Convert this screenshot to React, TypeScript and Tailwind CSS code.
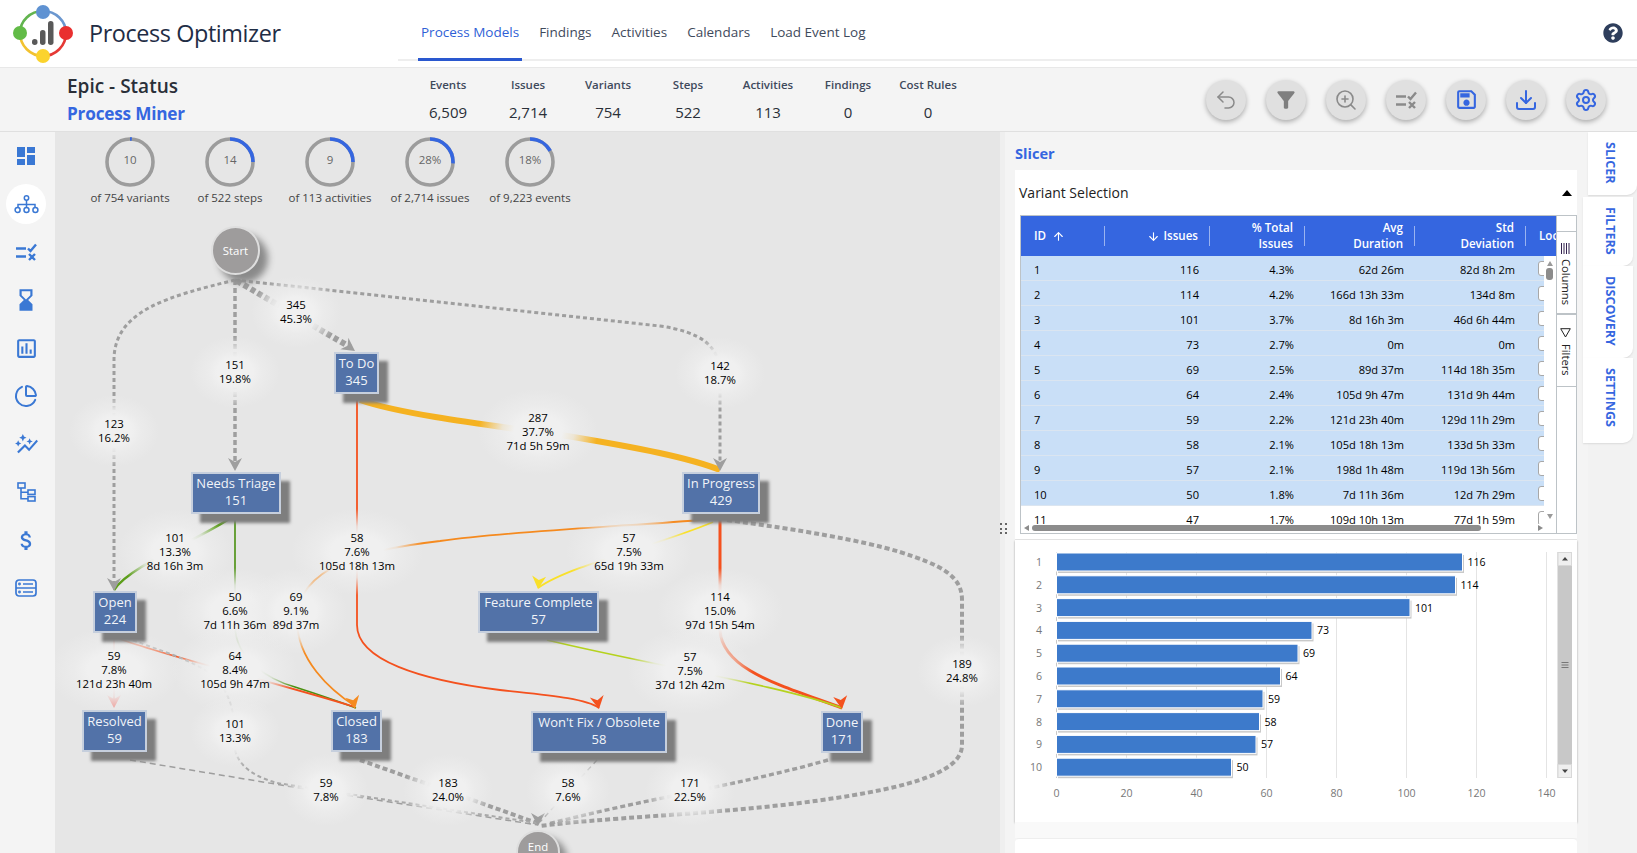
import { ArrowDown, ArrowUp, Download, PieChart, Settings, Undo2, ZoomIn } from 'lucide-react';
import { FaQuestionCircle } from 'react-icons/fa';
import { MdAttachMoney, MdAutoGraph, MdDashboard, MdFilterAlt, MdHourglassBottom, MdOutlineAssessment, MdOutlineSave } from 'react-icons/md';

const navItems = ['Process Models', 'Findings', 'Activities', 'Calendars', 'Load Event Log'];

const stats = [
  { label: 'Events', value: '6,509' },
  { label: 'Issues', value: '2,714' },
  { label: 'Variants', value: '754' },
  { label: 'Steps', value: '522' },
  { label: 'Activities', value: '113' },
  { label: 'Findings', value: '0' },
  { label: 'Cost Rules', value: '0' },
];

const rings = [
  { value: '10', label: 'of 754 variants', pct: 1.3 },
  { value: '14', label: 'of 522 steps', pct: 25 },
  { value: '9', label: 'of 113 activities', pct: 25 },
  { value: '28%', label: 'of 2,714 issues', pct: 26 },
  { value: '18%', label: 'of 9,223 events', pct: 17 },
];

const rows = [
  ['1', '116', '4.3%', '62d 26m', '82d 8h 2m'],
  ['2', '114', '4.2%', '166d 13h 33m', '134d 8m'],
  ['3', '101', '3.7%', '8d 16h 3m', '46d 6h 44m'],
  ['4', '73', '2.7%', '0m', '0m'],
  ['5', '69', '2.5%', '89d 37m', '114d 18h 35m'],
  ['6', '64', '2.4%', '105d 9h 47m', '131d 9h 44m'],
  ['7', '59', '2.2%', '121d 23h 40m', '129d 11h 29m'],
  ['8', '58', '2.1%', '105d 18h 13m', '133d 5h 33m'],
  ['9', '57', '2.1%', '198d 1h 48m', '119d 13h 56m'],
  ['10', '50', '1.8%', '7d 11h 36m', '12d 7h 29m'],
  ['11', '47', '1.7%', '109d 10h 13m', '77d 1h 59m'],
];

const bars = [116, 114, 101, 73, 69, 64, 59, 58, 57, 50];

// page coordinates, the svg below uses the same ones
const nodes = [
  { name: 'To Do', count: 345, x: 334, y: 352, w: 45, h: 42 },
  { name: 'Needs Triage', count: 151, x: 191, y: 472, w: 90, h: 42 },
  { name: 'In Progress', count: 429, x: 682, y: 472, w: 78, h: 42 },
  { name: 'Feature Complete', count: 57, x: 478, y: 591, w: 121, h: 42 },
  { name: 'Open', count: 224, x: 93, y: 591, w: 44, h: 42 },
  { name: 'Resolved', count: 59, x: 82, y: 710, w: 65, h: 42 },
  { name: 'Closed', count: 183, x: 331, y: 710, w: 51, h: 42 },
  { name: "Won't Fix / Obsolete", count: 58, x: 531, y: 711, w: 136, h: 42 },
  { name: 'Done', count: 171, x: 821, y: 711, w: 42, h: 42 },
];

const edgeLabels = [
  { x: 296, y: 312, lines: ['345', '45.3%'] },
  { x: 235, y: 372, lines: ['151', '19.8%'] },
  { x: 114, y: 431, lines: ['123', '16.2%'] },
  { x: 720, y: 373, lines: ['142', '18.7%'] },
  { x: 538, y: 432, lines: ['287', '37.7%', '71d 5h 59m'] },
  { x: 175, y: 552, lines: ['101', '13.3%', '8d 16h 3m'] },
  { x: 357, y: 552, lines: ['58', '7.6%', '105d 18h 13m'] },
  { x: 629, y: 552, lines: ['57', '7.5%', '65d 19h 33m'] },
  { x: 720, y: 611, lines: ['114', '15.0%', '97d 15h 54m'] },
  { x: 235, y: 611, lines: ['50', '6.6%', '7d 11h 36m'] },
  { x: 296, y: 611, lines: ['69', '9.1%', '89d 37m'] },
  { x: 114, y: 670, lines: ['59', '7.8%', '121d 23h 40m'] },
  { x: 235, y: 670, lines: ['64', '8.4%', '105d 9h 47m'] },
  { x: 690, y: 671, lines: ['57', '7.5%', '37d 12h 42m'] },
  { x: 962, y: 671, lines: ['189', '24.8%'] },
  { x: 235, y: 731, lines: ['101', '13.3%'] },
  { x: 326, y: 790, lines: ['59', '7.8%'] },
  { x: 448, y: 790, lines: ['183', '24.0%'] },
  { x: 568, y: 790, lines: ['58', '7.6%'] },
  { x: 690, y: 790, lines: ['171', '22.5%'] },
];

const edges = [
  { d: 'M235 280 C170 296 114 310 114 360 L114 585', c: '#9e9e9e', w: 3, dash: '4 3' },
  { d: 'M235 280 L235 462', c: '#9e9e9e', w: 3.5, dash: '5 3' },
  { d: 'M237 281 C270 300 320 330 350 347', c: '#9e9e9e', w: 6, dash: '5 3' },
  { d: 'M235 280 L660 326 C700 332 720 345 720 375 L720 462', c: '#9e9e9e', w: 3, dash: '4 3' },
  { d: 'M360 400 C400 414 480 424 567 436 C640 448 690 458 720 470', c: '#f5b221', w: 6 },
  { d: 'M357 394 L357 625 C357 660 420 680 500 690 C545 695 585 698 599 708', c: '#f4511e', w: 1.8 },
  { d: 'M235 515 C200 540 130 565 114 590', c: '#5c9e1a', w: 2.6 },
  { d: 'M235 513 L235 625 C235 660 270 680 295 687 C320 695 340 702 356 708', c: '#4a9010', w: 1.6 },
  { d: 'M118 638 C150 652 250 675 355 707', c: '#f4511e', w: 1.8 },
  { d: 'M114 633 L114 704', c: '#ee6a5f', w: 1.2 },
  { d: 'M700 520 C620 527 520 530 440 541 C370 549 297 565 297 620 C297 660 330 690 355 706', c: '#f58a1f', w: 1.8 },
  { d: 'M713 522 C660 545 570 565 538 588', c: '#f9e02a', w: 1.8 },
  { d: 'M720 513 L720 630 C722 670 780 685 842 708', c: '#f4511e', w: 3 },
  { d: 'M547 640 C650 665 780 685 842 708', c: '#b5d21e', w: 1.6 },
  { d: 'M727 520 C800 530 860 540 900 552 C940 565 962 575 962 600 L962 745 C962 775 900 790 800 803 C700 815 600 818 540 826', c: '#9e9e9e', w: 4, dash: '5 3' },
  { d: 'M360 760 L537 823', c: '#9e9e9e', w: 4, dash: '5 3' },
  { d: 'M130 760 L293 787 L538 825', c: '#9e9e9e', w: 1.5, dash: '6 4' },
  { d: 'M120 635 C150 648 180 655 205 670 C235 690 235 720 235 750 C240 770 260 778 277 783 L537 823', c: '#a8a8a8', w: 2, dash: '4 3' },
  { d: 'M597 760 L540 822', c: '#a8a8a8', w: 1.4, dash: '5 4' },
  { d: 'M828 760 C740 785 640 800 548 824', c: '#9e9e9e', w: 3.4, dash: '5 3' },
];

const arrows = [
  { x: 114, y: 591, a: 0, c: '#9e9e9e' },
  { x: 235, y: 471, a: 0, c: '#9e9e9e' },
  { x: 355, y: 351, a: -55, c: '#9e9e9e' },
  { x: 720, y: 471, a: 0, c: '#9e9e9e' },
  { x: 114, y: 708, a: 0, c: '#ef8f88' },
  { x: 355, y: 709, a: -12, c: '#f58a1f' },
  { x: 599, y: 709, a: -10, c: '#f4511e' },
  { x: 842, y: 709, a: -8, c: '#f4511e' },
  { x: 538, y: 589, a: 5, c: '#f9e02a' },
  { x: 538, y: 826, a: 0, c: '#9e9e9e' },
];

const Logo = () => (
  <svg width="62" height="64" viewBox="0 0 62 64" className="shrink-0">
    <g fill="none" strokeWidth="2.6">
      <path d="M31 11 A23 22 0 0 1 54 33" stroke="#6b97cf" />
      <path d="M54 33 A23 23 0 0 1 31 56" stroke="#e53935" />
      <path d="M31 56 A23 23 0 0 1 8 33" stroke="#f2c230" />
      <path d="M8 33 A23 22 0 0 1 31 11" stroke="#62b44f" />
    </g>
    <circle cx="31" cy="12" r="7" fill="#5f92d2" />
    <circle cx="8" cy="33" r="7" fill="#62bb47" />
    <circle cx="54" cy="33" r="7" fill="#e92f2f" />
    <circle cx="31" cy="56" r="7" fill="#fbd32d" />
    <g fill="#595959">
      <rect x="20" y="39" width="5.5" height="6" rx="2.7" />
      <rect x="28" y="30" width="5.5" height="15" rx="2.7" />
      <rect x="36" y="21" width="5.5" height="24" rx="2.7" />
    </g>
  </svg>
);

const ProcessIcon = () => (
  <svg width="25" height="19" viewBox="0 0 25 19" fill="none" stroke="#3a78d4" strokeWidth="1.5">
    <circle cx="12.5" cy="3" r="2.2" />
    <path d="M12.5 5.2V12 M4 12V9.5H21V12" />
    <circle cx="3.6" cy="15" r="2.5" />
    <circle cx="12.5" cy="15" r="2.5" />
    <circle cx="21.4" cy="15" r="2.5" />
  </svg>
);

const RuleIcon = ({ color, size }: { color: string; size: number }) => (
  <svg width={size} height={size} viewBox="0 0 24 24" fill="none" stroke={color} strokeWidth="2.4">
    <path d="M2 8.5H12 M2 16.5H12 M14 8.5L16.5 11L22 4.5 M15 14L21 20 M21 14L15 20" />
  </svg>
);

const TreeIcon = () => (
  <svg width="19" height="20" viewBox="0 0 19 20" fill="none" stroke="#3a78d4" strokeWidth="1.6">
    <rect x="1" y="1" width="7" height="5" />
    <rect x="11" y="8" width="7" height="4.4" />
    <rect x="11" y="14.6" width="7" height="4.4" />
    <path d="M4 6V16.8H11 M4 10.2H11" />
  </svg>
);

const ServerIcon = () => (
  <svg width="22" height="18" viewBox="0 0 22 18" fill="none" stroke="#3a78d4" strokeWidth="1.7">
    <rect x="1" y="1" width="20" height="16" rx="3" />
    <path d="M1 9H21 M8 5H18 M8 13H18" />
    <circle cx="4.5" cy="5" r="0.6" />
    <circle cx="4.5" cy="13" r="0.6" />
  </svg>
);

const sideIcons = [
  <MdDashboard key="a" size={24} color="#3a78d4" />,
  <ProcessIcon key="b" />,
  <RuleIcon key="c" color="#3a78d4" size={24} />,
  <MdHourglassBottom key="d" size={26} color="#3a78d4" />,
  <MdOutlineAssessment key="e" size={25} color="#3a78d4" />,
  <PieChart key="f" size={24} color="#3a78d4" strokeWidth={2} />,
  <MdAutoGraph key="g" size={25} color="#3a78d4" />,
  <TreeIcon key="h" />,
  <MdAttachMoney key="i" size={25} color="#3a78d4" />,
  <ServerIcon key="j" />,
];

const Ring = ({ value, label, pct }: { value: string; label: string; pct: number }) => (
  <div className="w-[100px] flex flex-col items-center">
    <div className="relative w-[50px] h-[50px] flex items-center justify-center">
      <svg width="50" height="50" viewBox="0 0 50 50" className="absolute inset-0 -rotate-90">
        <circle cx="25" cy="25" r="23" fill="none" stroke="#9c9c9c" strokeWidth="3.6" />
        <circle cx="25" cy="25" r="23" fill="none" stroke="#3566e0" strokeWidth="3.6" pathLength={100} strokeDasharray={`${pct} 100`} />
      </svg>
      <span className="text-[11.5px] text-[#666666] -mt-[4px]">{value}</span>
    </div>
    <span className="text-[11.5px] leading-[16px] mt-[3px] text-[#444444] whitespace-nowrap">{label}</span>
  </div>
);

const Canvas = () => (
  <div className="relative w-[945px] bg-[#e6e6e6] overflow-hidden">
    <div className="relative z-10 flex pl-[25px] pt-[5px]">
      {rings.map((r) => (
        <Ring key={r.label} {...r} />
      ))}
    </div>
    <svg width="945" height="721" viewBox="55 132 945 721" className="absolute left-0 top-0">
      {edges.map((e, i) => (
        <path key={i} d={e.d} fill="none" stroke={e.c} strokeWidth={e.w} strokeDasharray={e.dash} />
      ))}
      {arrows.map((a, i) => (
        <path key={i} transform={`translate(${a.x} ${a.y}) rotate(${a.a})`} d="M0 0L-7 -13L0 -9L7 -13Z" fill={a.c} />
      ))}
    </svg>
    {/* glows go first so that a neighbouring glow never washes out a label */}
    {edgeLabels.map((l) => {
      const w = Math.max(...l.lines.map((t) => t.length)) * 6 + 60;
      const h = l.lines.length * 14 + 44;
      return (
        <div
          key={`${l.x}-${l.y}`}
          className="absolute bg-[radial-gradient(closest-side,#f0f0f0_40%,#ececece0_60%,#e6e6e600_100%)]"
          style={{ left: l.x - 55 - w / 2, top: l.y - 132 - h / 2, width: w, height: h }}
        />
      );
    })}
    {edgeLabels.map((l) => (
      <div
        key={`${l.x}-${l.y}`}
        className="absolute -translate-x-1/2 -translate-y-1/2 text-center text-[11.4px] leading-[14px] text-black whitespace-nowrap"
        style={{ left: l.x - 55, top: l.y - 132 }}
      >
        {l.lines.map((t) => (
          <div key={t}>{t}</div>
        ))}
      </div>
    ))}
    {nodes.map((n) => (
      <div
        key={n.name}
        className="absolute flex flex-col justify-center items-center pb-[2px] bg-[#5272a8] border-2 border-[#c6cfdd] shadow-[9px_9px_3px_#7e7e7e] text-[#f1f4f9] text-[13px] leading-[17px] whitespace-nowrap"
        style={{ left: n.x - 55, top: n.y - 132, width: n.w, height: n.h }}
      >
        <span>{n.name}</span>
        <span>{n.count}</span>
      </div>
    ))}
    <div className="absolute left-[156px] top-[94px] w-[49px] h-[49px] rounded-full bg-[#9e9c9c] border-2 border-[#dedede] shadow-[8px_8px_7px_#8a8a8a] flex items-center justify-center text-white text-[11.4px]">
      Start
    </div>
    <div className="absolute left-[461px] top-[698px] w-[44px] h-[44px] rounded-full bg-[#9e9c9c] border-2 border-[#dedede] shadow-[7px_7px_7px_#8a8a8a] flex justify-center pt-[9px] text-white text-[11.4px] leading-[11px]">
      End
    </div>
  </div>
);

const colClasses = ['w-[84px] text-left pl-[13px]', 'w-[105px] text-right pr-[11px]', 'w-[95px] text-right pr-[11px]', 'w-[110px] text-right pr-[11px]', 'w-[111px] text-right pr-[11px]'];

const Grid = () => (
  <div className="ml-[5px] h-[319px] w-[557px] border border-[#bdc3c7] flex bg-white">
    <div className="w-[535px] flex flex-col">
      <div className="h-[40px] bg-[#3566e0] text-white text-[11.6px] leading-[16px] font-semibold flex overflow-hidden shrink-0">
        <div className="w-[84px] shrink-0 flex items-center">
          <span className="flex-1 pl-[13px] flex items-center gap-[6px]">ID <ArrowUp size={13} /></span>
          <span className="w-px h-[20px] bg-white/50" />
        </div>
        <div className="w-[105px] shrink-0 flex items-center">
          <span className="flex-1 pr-[11px] flex items-center justify-end gap-[3px]"><ArrowDown size={13} /> Issues</span>
          <span className="w-px h-[20px] bg-white/50" />
        </div>
        <div className="w-[95px] shrink-0 flex items-center">
          <span className="flex-1 pr-[11px] text-right">% Total<br />Issues</span>
          <span className="w-px h-[20px] bg-white/50" />
        </div>
        <div className="w-[110px] shrink-0 flex items-center">
          <span className="flex-1 pr-[11px] text-right">Avg<br />Duration</span>
          <span className="w-px h-[20px] bg-white/50" />
        </div>
        <div className="w-[111px] shrink-0 flex items-center">
          <span className="flex-1 pr-[11px] text-right">Std<br />Deviation</span>
          <span className="w-px h-[20px] bg-white/50" />
        </div>
        <div className="shrink-0 flex items-center pl-[13px]">Loc</div>
      </div>
      <div className="h-[268px] flex shrink-0">
        <div className="w-[523px] overflow-hidden">
          {rows.map((r, i) => (
            <div key={r[0]} className={`w-[540px] h-[25px] flex items-center pt-[4px] text-[11.1px] text-black border-b ${i < 10 ? 'bg-[#c9dff7] border-[#dbe5f0]' : 'bg-white border-white'}`}>
              {r.map((c, j) => (
                <div key={j} className={`${colClasses[j]} shrink-0`}>{c}</div>
              ))}
              <div className="ml-[12px] -mt-[3px] w-[12px] h-[15px] shrink-0 bg-white border border-[#a8a8a8] rounded-[3px]" />
            </div>
          ))}
        </div>
        <div className="w-[12px] relative bg-white">
          <span className="absolute left-[3px] top-[5px] w-0 h-0 border-x-[3px] border-x-transparent border-b-[5px] border-b-[#9a9a9a]" />
          <span className="absolute left-[2px] top-[12px] w-[7px] h-[12px] rounded-[3px] bg-[#8c8c8c]" />
          <span className="absolute left-[3px] bottom-[5px] w-0 h-0 border-x-[3px] border-x-transparent border-t-[5px] border-t-[#9a9a9a]" />
        </div>
      </div>
      <div className="h-[9px] relative bg-white">
        <span className="absolute left-[3px] top-[1px] w-0 h-0 border-y-[3px] border-y-transparent border-r-[5px] border-r-[#8c8c8c]" />
        <span className="absolute left-[11px] top-[1px] w-[449px] h-[6px] rounded-[3px] bg-[#8c8c8c]" />
        <span className="absolute right-[13px] top-[1px] w-0 h-0 border-y-[3px] border-y-transparent border-l-[5px] border-l-[#8c8c8c]" />
      </div>
    </div>
    <div className="w-[21px] border-l border-[#bdc3c7] flex flex-col text-[11.2px] text-[#222222]">
      <div className="h-[16px] border-b border-[#bdc3c7]" />
      <div className="h-[83px] border-b-2 border-[#bdc3c7] flex flex-col items-center pr-[2px] pt-[11px] gap-[5px]">
        <svg width="11" height="11" viewBox="0 0 11 11" stroke="#33224f" strokeWidth="1"><path d="M1.5 0V11 M4 0V11 M6.5 0V11 M9 0V11" /></svg>
        <span className="[writing-mode:vertical-rl]">Columns</span>
      </div>
      <div className="h-[72px] border-b border-[#bdc3c7] flex flex-col items-center pr-[2px] pt-[13px] gap-[6px]">
        <svg width="11" height="10" viewBox="0 0 11 10" fill="none" stroke="#222222" strokeWidth="1"><path d="M0.7 0.7H10.3L5.5 9Z" /></svg>
        <span className="[writing-mode:vertical-rl]">Filters</span>
      </div>
    </div>
  </div>
);

const BarChart = () => (
  <svg width="562" height="282" viewBox="1015 540 562 282" className="block">
    {[0, 1, 2, 3, 4, 5, 6, 7].map((k) => (
      <g key={k}>
        <path d={`M${1056.5 + 70 * k} 552V778`} stroke={k === 0 ? '#c8c8c8' : '#e4e4e4'} strokeWidth="1" />
        <text x={1056.5 + 70 * k} y="797" textAnchor="middle" fontSize="10.6" fill="#777777">{k * 20}</text>
      </g>
    ))}
    {bars.map((b, i) => {
      const y = 553 + i * 22.8;
      const w = b * 3.5;
      return (
        <g key={i}>
          <rect x="1058" y={y + 2} width={w} height="18" fill="#c9c9c9" />
          <rect x="1056.5" y={y} width={w} height="18" fill="#3d7acb" stroke="#ffffff" strokeWidth="1" />
          <text x="1042" y={y + 13} textAnchor="end" fontSize="10.6" fill="#777777">{i + 1}</text>
          <text x={1056.5 + w + 5} y={y + 13} fontSize="10.6" fill="#000000">{b}</text>
        </g>
      );
    })}
    <rect x="1557.5" y="552" width="14.5" height="226" fill="#c8c8c8" />
    <rect x="1558" y="552.5" width="13.5" height="13" fill="#efefef" stroke="#d8d8d8" />
    <rect x="1558" y="764.5" width="13.5" height="13" fill="#efefef" stroke="#d8d8d8" />
    <path d="M1565 557L1568 560.5H1562Z M1565 773L1568 769.5H1562Z" fill="#444444" />
    <path d="M1561.5 662.5H1568.5 M1561.5 665H1568.5 M1561.5 667.5H1568.5" stroke="#777777" strokeWidth="1.2" />
  </svg>
);

const tabs = [
  { name: 'FILTERS', h: 'h-[69px]' },
  { name: 'DISCOVERY', h: 'h-[92px]' },
  { name: 'SETTINGS', h: 'h-[85px]' },
];

const Panel = () => (
  <>
    <div className="w-[5px] relative bg-[#efefef]">
      <div className="absolute left-0 top-[391px] w-[8px] h-[12px] grid grid-cols-2 gap-[2px] z-10">
        {[0, 1, 2, 3, 4, 5].map((k) => (
          <span key={k} className="w-[2px] h-[2px] bg-[#666666]" />
        ))}
      </div>
    </div>
    <div className="w-[583px] bg-[#f4f4f4] flex flex-col pl-[10px] pr-[11px]">
      <div className="h-[38px] flex items-center pt-[6px] text-[14.6px] font-bold text-[#3566e0]">Slicer</div>
      <div className="bg-white shrink-0">
        <div className="h-[45px] flex items-center justify-between pl-[4px] pr-[5px] text-[14px] text-[#222222]">
          <span>Variant Selection</span>
          <span className="w-0 h-0 border-x-[5px] border-x-transparent border-b-[6px] border-b-black" />
        </div>
        <Grid />
        <div className="h-[6px] border-b border-[#e8e8e8]" />
        <div className="shadow-[0_1px_2px_rgba(0,0,0,0.35)]">
          <BarChart />
        </div>
      </div>
      <div className="h-[16px] shrink-0 bg-[#f9f9f9]" />
      <div className="flex-1 bg-white rounded-t-[4px] border-t border-[#eeeeee]" />
    </div>
    <div className="w-[49px] bg-[#f2f2f2] flex flex-col">
      <div className="h-[63px] bg-white rounded-br-[10px] pl-[13px] pt-[10px] text-[12.6px] leading-[18px] font-bold text-[#3566e0] shadow-[0_1px_2px_rgba(0,0,0,0.1)]">
        <span className="[writing-mode:vertical-rl]">SLICER</span>
      </div>
      <div className="-ml-[5px] w-[50px] mt-[2px] flex flex-col">
        {tabs.map((t) => (
          <div key={t.name} className={`${t.h} bg-white rounded-br-[10px] pl-[18px] pt-[10px] text-[12.6px] leading-[18px] font-bold text-[#3566e0] shadow-[0_1px_2px_rgba(0,0,0,0.1)]`}>
            <span className="[writing-mode:vertical-rl]">{t.name}</span>
          </div>
        ))}
      </div>
    </div>
  </>
);

export default function App() {
  return (
    <div className="w-[1637px] h-[853px] overflow-hidden flex flex-col bg-white text-[#333333] font-['Open_Sans','Noto_Sans',sans-serif]">
      <header className="h-[68px] shrink-0 bg-white border-b border-[#e8e8e8]">
        <div className="h-[61px] flex">
          <div className="w-[398px] flex items-start pl-[12px] gap-[15px]">
            <Logo />
            <span className="text-[23.4px] leading-[66px] text-[#1f2d45] whitespace-nowrap tracking-[-0.4px]">Process Optimizer</span>
          </div>
          <nav className="flex-1 border-b-2 border-[#eeeeee] flex pl-[20px] pr-[14px] gap-[14px]">
            {navItems.map((n, i) => (
              <div key={n} className={`h-[61px] px-[3px] pt-[7px] flex items-center text-[13.5px] font-medium whitespace-nowrap border-b-[3px] ${i === 0 ? 'text-[#2f5fd6] border-[#2a58cf]' : 'text-[#3f4a5c] border-transparent'}`}>
                {n}
              </div>
            ))}
            <div className="ml-auto h-[61px] flex items-center pt-[5px]">
              <FaQuestionCircle size={20} color="#2e3e5c" />
            </div>
          </nav>
        </div>
      </header>
      <section className="h-[64px] shrink-0 bg-[#f4f4f4] border-b border-[#e0e0e0] flex items-center">
        <div className="w-[408px] pl-[67px]">
          <div className="text-[19px] leading-[28px] font-semibold text-[#2a2f38]">Epic - Status</div>
          <div className="text-[17.2px] leading-[28px] font-bold text-[#3566e0] -tracking-[0.2px]">Process Miner</div>
        </div>
        {stats.map((s) => (
          <div key={s.label} className="w-[80px] text-center -mt-[3px]">
            <div className="text-[11.5px] leading-[28px] font-semibold text-[#3f4a5c] whitespace-nowrap">{s.label}</div>
            <div className="text-[15px] leading-[27px] text-[#2a2f38]">{s.value}</div>
          </div>
        ))}
        <div className="ml-auto pr-[31px] flex gap-[20px]">
          {[
            <Undo2 key="a" size={24} color="#8a8a8a" strokeWidth={1.5} />,
            <MdFilterAlt key="b" size={26} color="#7f7f7f" />,
            <ZoomIn key="c" size={24} color="#8a8a8a" strokeWidth={1.6} />,
            <RuleIcon key="d" color="#8a8a8a" size={24} />,
            <MdOutlineSave key="e" size={25} color="#3566e0" />,
            <Download key="f" size={24} color="#3566e0" strokeWidth={2} />,
            <Settings key="g" size={24} color="#3566e0" strokeWidth={2} />,
          ].map((ic) => (
            <div key={ic.key} className="w-[40px] h-[40px] rounded-full bg-[#e0e0e0] shadow-[0_2px_5px_rgba(0,0,0,0.3)] flex items-center justify-center">
              {ic}
            </div>
          ))}
        </div>
      </section>
      <main className="flex-1 flex min-h-0">
        <aside className="w-[55px] shrink-0 bg-[#f4f4f4] flex flex-col pl-[6px]">
          {sideIcons.map((ic, i) => (
            <div key={i} className={`w-[40px] h-[40px] my-[4px] rounded-full flex items-center justify-center ${i === 1 ? 'bg-white' : ''}`}>
              {ic}
            </div>
          ))}
        </aside>
        <Canvas />
        <Panel />
      </main>
    </div>
  );
}
